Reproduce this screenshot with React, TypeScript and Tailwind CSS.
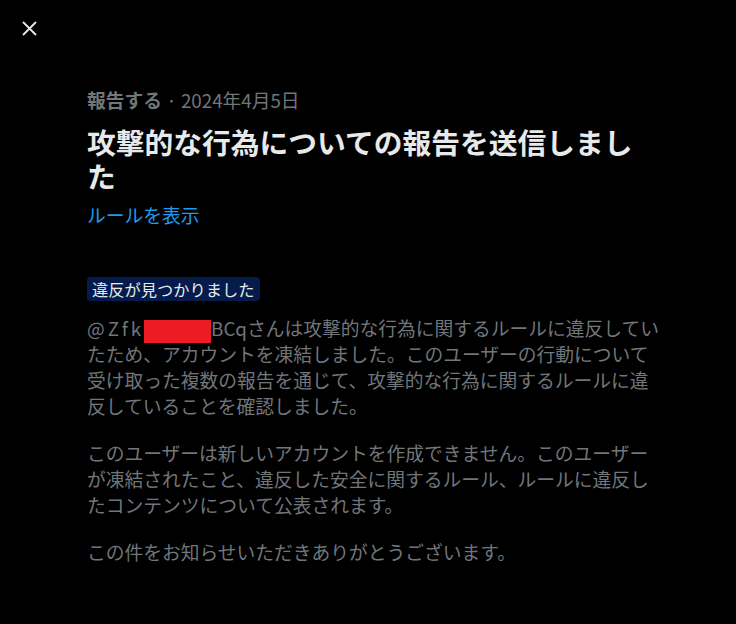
export default function App() {
  return (
    <div
      className="min-h-[624px] bg-black pt-[21px] pl-[22px]"
      style={{ fontFamily: '"Noto Sans CJK JP", "Noto Sans", sans-serif' }}
    >
      <button className="block h-[15px] w-[15px] text-[#e7e9ea]" aria-label="閉じる">
        <svg viewBox="0 0 15 15" className="h-[15px] w-[15px]" fill="none" stroke="currentColor" strokeWidth="1.8">
          <path d="M1 1 L14 14 M14 1 L1 14" />
        </svg>
      </button>

      <div className="ml-[65px] mt-[51px] w-[572px]">
        <div className="text-[18.75px] leading-[25px] text-[#71767b]">
          <span className="font-bold">報告する</span>
          <span> · 2024年4月5日</span>
        </div>

        <h1 className="mt-[13px] text-[28.75px] font-bold leading-[34px] text-[#e7e9ea]">
          攻撃的な行為についての報告を送信しました
        </h1>

        <a className="mt-[9px] block text-[18.75px] leading-[25px] text-[#1d9bf0]">ルールを表示</a>

        <div className="mt-[50px]">
          <span className="inline-block rounded-[4px] bg-[#041b4c] px-[5px] text-[16.25px] leading-[24px] text-[#e7e9ea]">
            違反が見つかりました
          </span>
        </div>

        <div className="text-[18.75px] leading-[26px] text-[#71767b]">
          <p className="mt-[14px]">
            <span className="tracking-[3px]">@Zfk</span>
            <span className="relative top-[3px] inline-block h-[23px] w-[67px] bg-[#ed1c24] align-[-4px]" />
            BCqさんは攻撃的な行為に関するルールに違反していたため、アカウントを凍結しました。このユーザーの行動について受け取った複数の報告を通じて、攻撃的な行為に関するルールに違反していることを確認しました。
          </p>
          <p className="mt-[21px]">
            このユーザーは新しいアカウントを作成できません。このユーザーが凍結されたこと、違反した安全に関するルール、ルールに違反したコンテンツについて公表されます。
          </p>
          <p className="mt-[21px]">この件をお知らせいただきありがとうございます。</p>
        </div>
      </div>
    </div>
  );
}
